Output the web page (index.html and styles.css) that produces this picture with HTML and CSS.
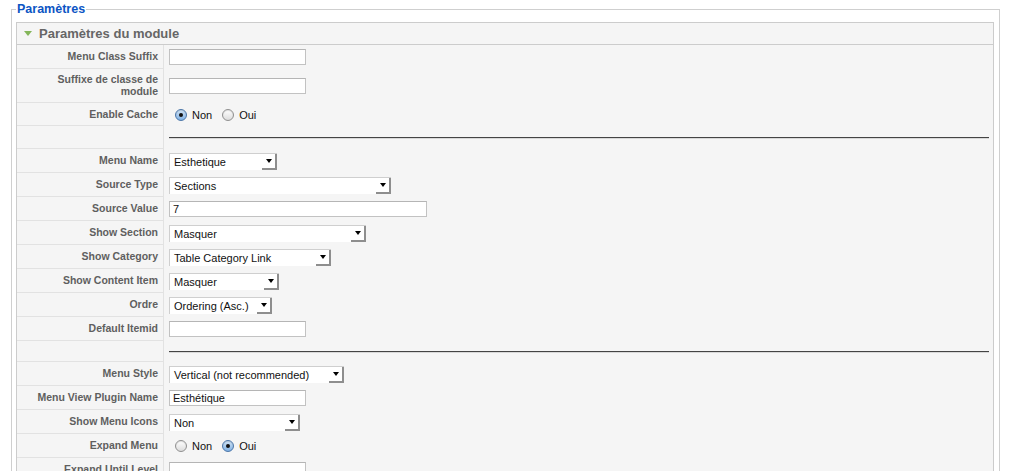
FILE: index.html
```html
<!DOCTYPE html>
<html lang="fr">
<head>
<meta charset="utf-8">
<title>Paramètres</title>
<link rel="stylesheet" href="styles.css">
</head>
<body>
<fieldset class="adminform">
  <legend>Paramètres</legend>
  <div class="panel">
    <h3 class="toggler"><span class="tri"></span>Paramètres du module</h3>
    <div class="paramlist">
      <div class="row"><div class="key">Menu Class Suffix</div><div class="val"><input class="text w137" type="text" value=""></div></div>
      <div class="row tall"><div class="key">Suffixe de classe de module</div><div class="val"><input class="text w137" type="text" value=""></div></div>
      <div class="row r23"><div class="key">Enable Cache</div><div class="val radios"><span class="radio on"></span><span class="rlabel">Non</span><span class="radio"></span><span class="rlabel">Oui</span></div></div>
      <div class="row spacer s1"><div class="key"></div><div class="val"><hr></div></div>
      <div class="row"><div class="key">Menu Name</div><div class="val"><div class="sel" style="width:108px"><span>Esthetique</span><span class="arr"></span></div></div></div>
      <div class="row"><div class="key">Source Type</div><div class="val"><div class="sel" style="width:222px"><span>Sections</span><span class="arr"></span></div></div></div>
      <div class="row"><div class="key">Source Value</div><div class="val"><input class="text w258" type="text" value="7"></div></div>
      <div class="row"><div class="key">Show Section</div><div class="val"><div class="sel" style="width:197px"><span>Masquer</span><span class="arr"></span></div></div></div>
      <div class="row"><div class="key">Show Category</div><div class="val"><div class="sel" style="width:162px"><span>Table Category Link</span><span class="arr"></span></div></div></div>
      <div class="row"><div class="key">Show Content Item</div><div class="val"><div class="sel" style="width:110px"><span>Masquer</span><span class="arr"></span></div></div></div>
      <div class="row"><div class="key">Ordre</div><div class="val"><div class="sel" style="width:103px"><span>Ordering (Asc.)</span><span class="arr"></span></div></div></div>
      <div class="row"><div class="key">Default Itemid</div><div class="val"><input class="text w137" type="text" value=""></div></div>
      <div class="row spacer s2"><div class="key"></div><div class="val"><hr></div></div>
      <div class="row"><div class="key">Menu Style</div><div class="val"><div class="sel" style="width:175px"><span>Vertical (not recommended)</span><span class="arr"></span></div></div></div>
      <div class="row"><div class="key">Menu View Plugin Name</div><div class="val"><input class="text w137" type="text" value="Esthétique"></div></div>
      <div class="row"><div class="key">Show Menu Icons</div><div class="val"><div class="sel" style="width:131px"><span>Non</span><span class="arr"></span></div></div></div>
      <div class="row"><div class="key">Expand Menu</div><div class="val radios"><span class="radio"></span><span class="rlabel">Non</span><span class="radio on"></span><span class="rlabel">Oui</span></div></div>
      <div class="row"><div class="key">Expand Until Level</div><div class="val"><input class="text w137" type="text" value=""></div></div>
    </div>
  </div>
</fieldset>
</body>
</html>
```
FILE: styles.css
```css
* { box-sizing: border-box; }
html, body { height: 471px; overflow: hidden; }
body {
  margin: 0;
  background: #fff;
  font-family: "Liberation Sans", Arial, sans-serif;
  font-size: 11px;
  color: #222;
}
.adminform {
  margin: 2px 12px 0 11px;
  padding: 6px 5px 0 4px;
  border: 1px solid #cfcfcf;
  min-width: 0;
}
.adminform legend {
  padding: 0 1px;
  margin: 0;
  font-size: 12.5px;
  line-height: 14px;
  font-weight: bold;
  color: #0b55c4;
}
.panel {
  border: 1px solid #cccccc;
  background: #f5f5f5;
}
.toggler {
  margin: 0;
  height: 22px;
  border-bottom: 1px solid #cccccc;
  display: flex;
  align-items: center;
  padding: 0 0 1px 7px;
  font-size: 13px;
  font-weight: bold;
  color: #666;
}
.tri {
  width: 0;
  height: 0;
  border-left: 4px solid transparent;
  border-right: 4px solid transparent;
  border-top: 5px solid #84b65a;
  margin: 1px 7px 0 0;
}
.row {
  display: grid;
  grid-template-columns: 147px 1fr;
  height: 24px;
}
.row.tall { height: 34px; }
.row.r23 { height: 23px; }
.row.s1 { height: 23px; }
.row.s2 { height: 21px; }
.key {
  border-right: 1px solid #e2e2e2;
  border-bottom: 1px solid #e2e2e2;
  padding: 4px 5px 5px;
  display: flex;
  align-items: center;
  justify-content: flex-end;
  text-align: right;
  font-weight: bold;
  font-size: 10.5px;
  line-height: 12px;
  color: #5f5f5f;
}
.val {
  padding: 0 4px 0 5px;
  display: flex;
  align-items: center;
}
.text {
  height: 16px;
  margin: 0;
  padding: 0 0 0 3px;
  border: 1px solid #c2c2c2;
  border-top-color: #b5b5b5;
  background: #fff;
  font-family: "Liberation Sans", Arial, sans-serif;
  font-size: 11px;
  color: #111;
  outline: none;
}
.w137 { width: 137px; }
.w258 { width: 258px; }
.sel {
  height: 17px;
  display: flex;
  align-items: center;
  justify-content: space-between;
  background: #fff;
  border: 1px solid #cfcfcf;
  border-right: none;
  border-bottom: none;
  padding-left: 4px;
  font-size: 11px;
  color: #111;
  white-space: nowrap;
}
.arr {
  width: 15px;
  height: 16px;
  align-self: flex-start;
  border-right: 2px solid #8e8e8e;
  border-bottom: 2px solid #8e8e8e;
  background: #fff;
  display: flex;
  align-items: center;
  justify-content: center;
}
.arr::after {
  content: "";
  width: 0;
  height: 0;
  border-left: 3.5px solid transparent;
  border-right: 3.5px solid transparent;
  border-top: 4px solid #000;
  margin-left: 1px;
}
.radios { padding-left: 11px; }
.radio {
  width: 12px;
  height: 12px;
  border-radius: 50%;
  border: 1px solid #8f8f8f;
  background: linear-gradient(#ffffff, #dcdcdc);
  box-shadow: inset 0 1px 1px rgba(0,0,0,0.12);
  display: flex;
  align-items: center;
  justify-content: center;
}
.radio.on {
  border-color: #4a75a8;
  background: linear-gradient(#d3e6f8, #7fb0e3);
}
.radio.on::after {
  content: "";
  width: 4px;
  height: 4px;
  border-radius: 50%;
  background: #111;
}
.rlabel {
  margin: 0 10px 0 5px;
  font-size: 11px;
  color: #111;
}
hr {
  width: 100%;
  height: 0;
  margin: 0;
  border: none;
  border-top: 1px solid #444;
  border-bottom: 1px solid #d8d8d8;
}
```
